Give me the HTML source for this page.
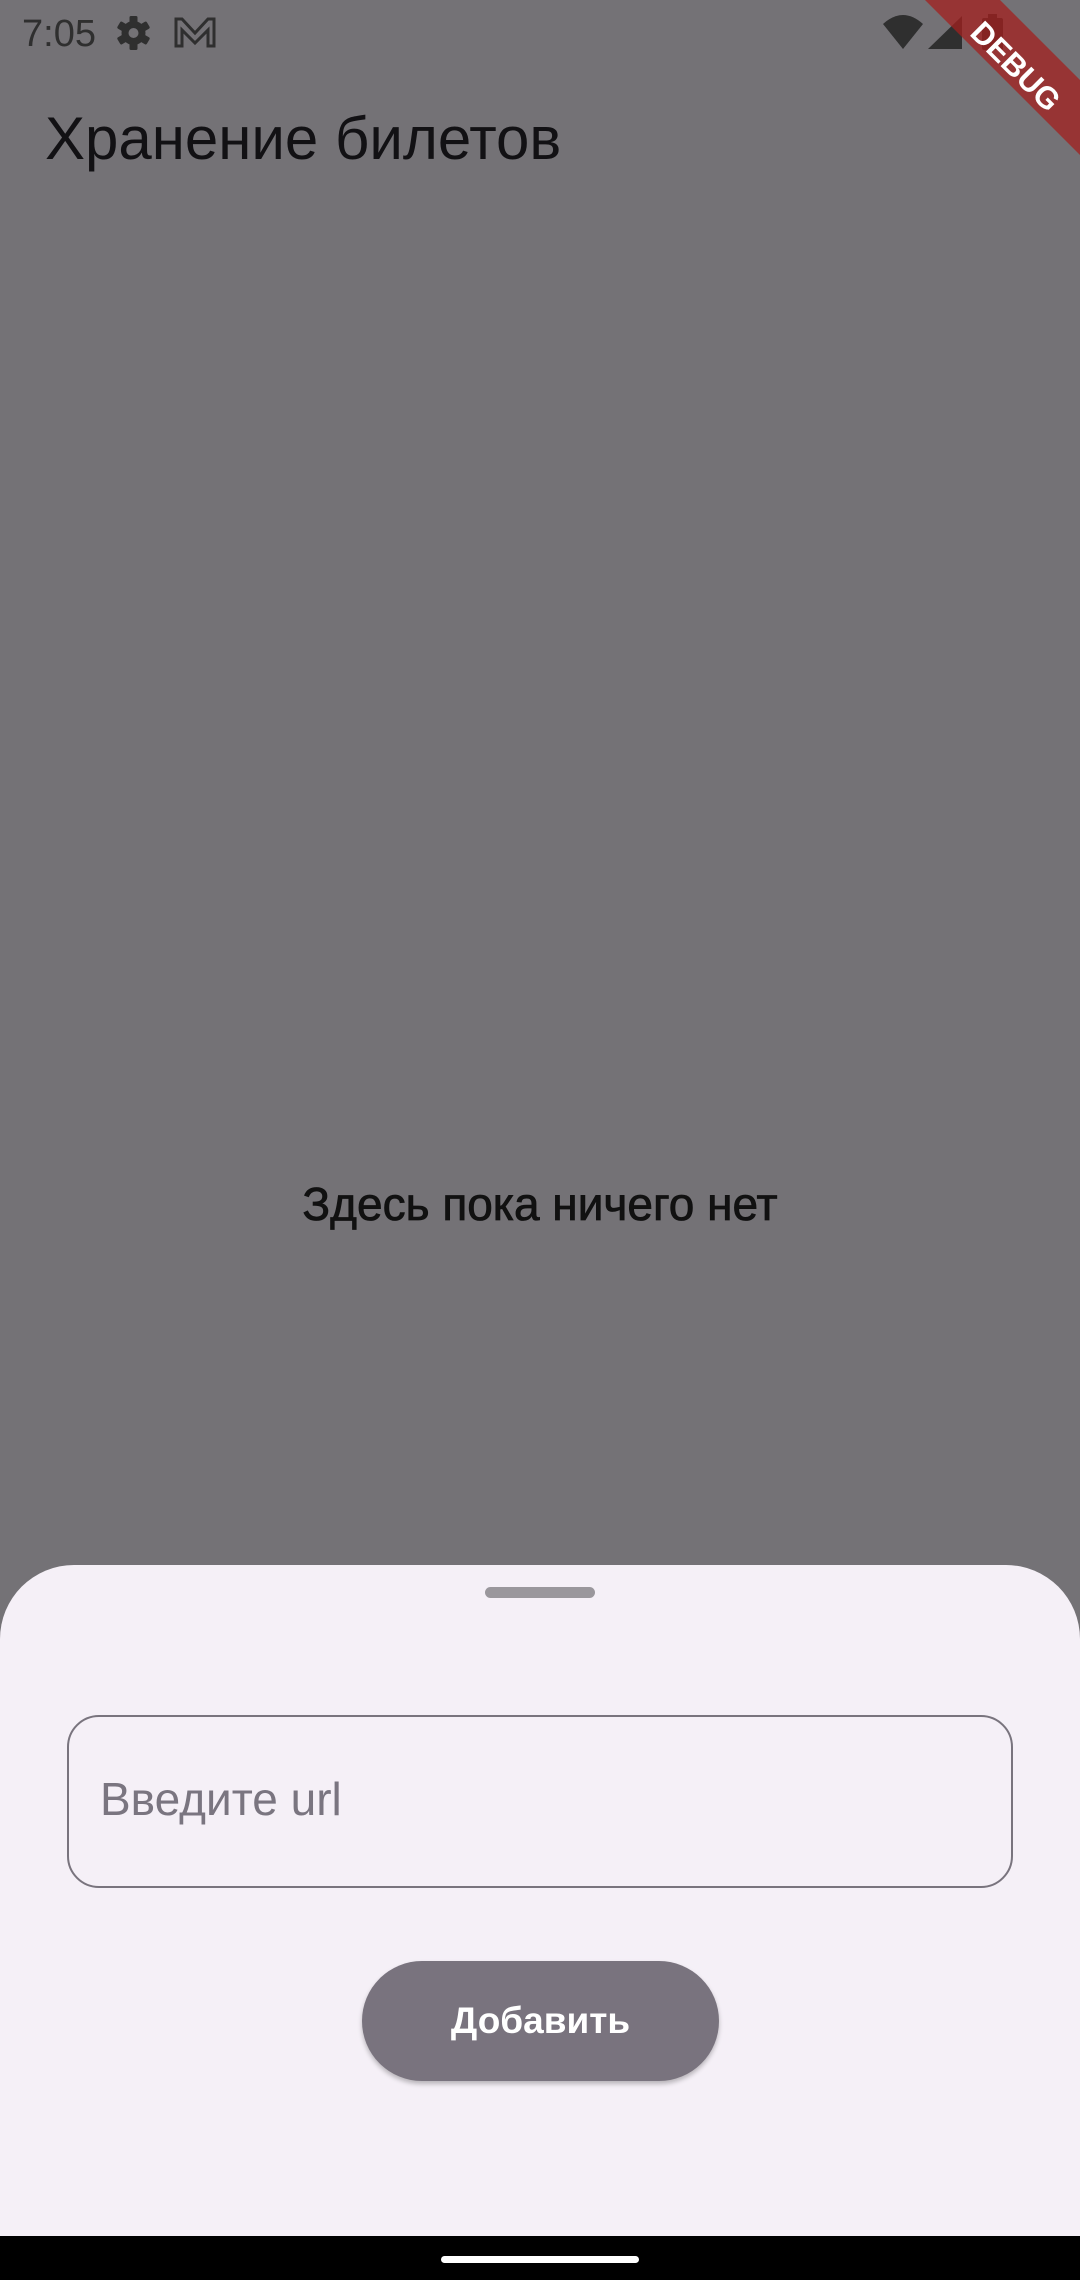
<!DOCTYPE html>
<html><head><meta charset="utf-8"><style>
*{margin:0;padding:0;box-sizing:border-box}
html,body{width:1080px;height:2280px;overflow:hidden}
body{background:#747276;position:relative;font-family:"Liberation Sans","DejaVu Sans",sans-serif}
.abs{position:absolute}
#time{left:22px;top:12px;font-size:38px;color:#2f2f2f;line-height:44px}
#title{left:45px;top:102px;font-size:60px;color:#121114;line-height:74px;white-space:nowrap}
#empty{left:0;width:1080px;top:1175px;text-align:center;font-size:46px;color:#111;line-height:58px;-webkit-text-stroke:0.8px #111}
#sheet{left:0;top:1565px;width:1080px;height:671px;background:#f5f0f7;border-radius:74px 74px 0 0}
#handle{left:485px;top:1587px;width:110px;height:11px;border-radius:6px;background:#9a979c}
#field{left:67px;top:1715px;width:946px;height:173px;border:2.6px solid #79747e;border-radius:32px}
#ph{left:100px;top:1770px;font-size:46px;color:#7a7580;line-height:58px}
#btn{left:362px;top:1961px;width:357px;height:120px;border-radius:60px;background:#79737e;box-shadow:0 3px 5px rgba(0,0,0,.25);color:#fff;font-size:37px;font-weight:bold;text-align:center;line-height:120px}
#nav{left:0;top:2236px;width:1080px;height:44px;background:#000}
#navh{left:441px;top:2256px;width:198px;height:7px;border-radius:4px;background:#fff}
</style></head><body>
<div class="abs" id="time">7:05</div>
<svg class="abs" style="left:0;top:0" width="1080" height="170" viewBox="0 0 1080 170">
 <g fill="#2f2f2f">
  <circle cx="133.5" cy="33" r="12"/>
  <g transform="translate(133.5,33)">
   <rect x="-4" y="-17" width="8" height="34" rx="1.5"/>
   <rect x="-4" y="-17" width="8" height="34" rx="1.5" transform="rotate(60)"/>
   <rect x="-4" y="-17" width="8" height="34" rx="1.5" transform="rotate(120)"/>
  </g>
  <circle cx="133.5" cy="33" r="5" fill="#747276"/>
  <path d="M176 46V19h6l13 14 13-14h6v27h-6V30l-13 13-13-13v16z" fill="none" stroke="#2f2f2f" stroke-width="3"/>
  <path d="M883 24 Q903 6 923 24 L903 49Z"/>
  <path d="M962 16 V49 H928Z"/>
  <rect x="982" y="18" width="21" height="32" rx="2"/>
  <rect x="988" y="14" width="9" height="5"/>
 </g>
 <polygon points="925,0 1000,0 1080,80 1080,155" fill="#a3201f" opacity="0.75"/>
 <text x="0" y="0" transform="translate(1014,68) rotate(45)" text-anchor="middle" dominant-baseline="middle" font-family="Liberation Sans,sans-serif" font-weight="bold" font-size="31" fill="#fff">DEBUG</text>
</svg>
<div class="abs" id="title">Хранение билетов</div>
<div class="abs" id="empty">Здесь пока ничего нет</div>
<div class="abs" id="sheet"></div>
<div class="abs" id="handle"></div>
<div class="abs" id="field"></div>
<div class="abs" id="ph">Введите url</div>
<div class="abs" id="btn">Добавить</div>
<div class="abs" id="nav"></div>
<div class="abs" id="navh"></div>
</body></html>
